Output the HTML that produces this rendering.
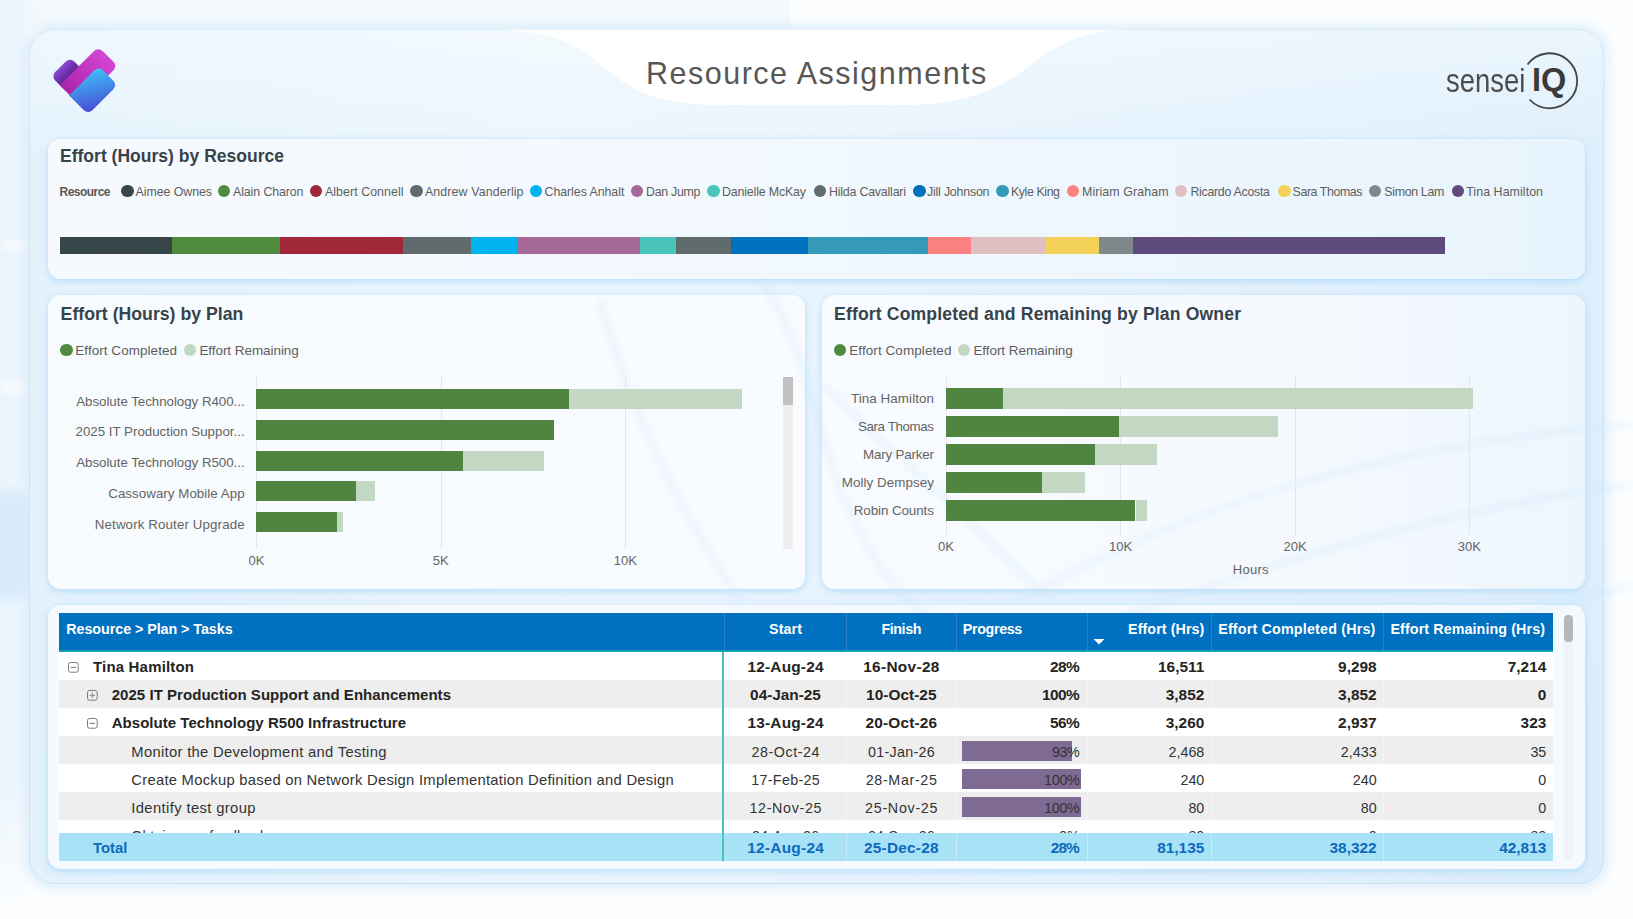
<!DOCTYPE html>
<html><head><meta charset="utf-8"><title>Resource Assignments</title>
<style>
html,body{margin:0;padding:0;}
body{width:1633px;height:919px;position:relative;overflow:hidden;font-family:"Liberation Sans", sans-serif;background:#fdfeff;}
.bg{position:absolute;left:0;top:0;}
.abs{position:absolute;}
.t{position:absolute;white-space:nowrap;}
.r{position:absolute;}
.dot{position:absolute;width:12.5px;height:12.5px;border-radius:50%;}
.card{position:absolute;border-radius:13px;box-shadow:0 2px 7px rgba(140,200,245,0.55);}
</style></head><body>
<svg class="bg" width="1633" height="919" viewBox="0 0 1633 919">
<defs>
<linearGradient id="bgl" x1="0" y1="0" x2="1" y2="0">
<stop offset="0" stop-color="#e9f4fc"/><stop offset="0.6" stop-color="#eef6fd"/><stop offset="1" stop-color="#eef6fd" stop-opacity="0"/>
</linearGradient>
<linearGradient id="panelg" x1="0" y1="0" x2="1" y2="0">
<stop offset="0" stop-color="#e2f1fc"/><stop offset="0.33" stop-color="#e9f5fd"/><stop offset="0.6" stop-color="#e5f2fd"/><stop offset="1" stop-color="#dbeefc"/>
</linearGradient>
<linearGradient id="panelv" x1="0" y1="0" x2="0" y2="1">
<stop offset="0" stop-color="#ffffff" stop-opacity="0.45"/><stop offset="0.14" stop-color="#ffffff" stop-opacity="0.1"/><stop offset="1" stop-color="#ffffff" stop-opacity="0"/>
</linearGradient>
<filter id="blur6" x="-10%" y="-10%" width="120%" height="120%"><feGaussianBlur stdDeviation="5"/></filter>
<filter id="blur3"><feGaussianBlur stdDeviation="2"/></filter>
</defs>
<rect width="1633" height="919" fill="#fdfeff"/>
<rect x="0" y="0" width="790" height="30" fill="#f4f9fd"/>
<mask id="lm"><linearGradient id="lmg" x1="0" y1="0" x2="0" y2="1"><stop offset="0" stop-color="#fff"/><stop offset="0.85" stop-color="#fff"/><stop offset="1" stop-color="#000"/></linearGradient><rect x="0" y="0" width="40" height="919" fill="url(#lmg)"/></mask>
<rect x="0" y="0" width="40" height="919" fill="url(#bgl)" mask="url(#lm)"/>
<ellipse cx="10" cy="545" rx="45" ry="55" fill="#d2e8fa" filter="url(#blur6)" opacity="0.7"/>
<rect x="0" y="240" width="26" height="10" fill="#ffffff" filter="url(#blur6)" opacity="0.6"/>
<rect x="0" y="380" width="26" height="14" fill="#ffffff" filter="url(#blur6)" opacity="0.6"/>
<rect x="23" y="23" width="1587" height="868" rx="31" fill="#d3e9fa" filter="url(#blur6)" opacity="0.6"/>
<rect x="29.5" y="29.5" width="1574" height="854" rx="25" fill="url(#panelg)" stroke="#c9e3f7" stroke-width="1"/>
<rect x="29.5" y="29.5" width="1574" height="854" rx="25" fill="url(#panelv)"/>
<path d="M495,29.5 C545,30 575,42 605,68 C635,95 665,105 725,105 L905,105 C960,105 995,92 1028,67 C1060,42 1085,29.5 1135,29.5 Z" fill="#ffffff"/>
</svg>
<svg class="abs" style="left:45px;top:40px" width="80" height="80" viewBox="45 40 80 80">
<defs>
<linearGradient id="lgp" x1="0.5" y1="0" x2="0.5" y2="0.55"><stop offset="0" stop-color="#8a4ad6"/><stop offset="1" stop-color="#5e2494"/></linearGradient>
<linearGradient id="lgm" x1="1" y1="0.5" x2="0" y2="0.5"><stop offset="0" stop-color="#d646d6"/><stop offset="1" stop-color="#a824a8"/></linearGradient>
<linearGradient id="lgb" x1="1" y1="0" x2="0" y2="1"><stop offset="0" stop-color="#3cc6f8"/><stop offset="1" stop-color="#4a46d4"/></linearGradient>
</defs>
<g transform="rotate(-45 0 0)">
<rect x="-18" y="90" width="27" height="24" rx="6" fill="url(#lgp)"/>
<path d="M-18,102.5 L30.5,102.5 A6,6 0 0 1 36.5,108.5 L36.5,124 A6,6 0 0 1 30.5,130 L-18,130 Z" fill="url(#lgm)"/>
<path d="M-18.7,116.5 L17,116.5 A6,6 0 0 1 23,122.5 L23,137.3 A6,6 0 0 1 17,143.3 L-12.7,143.3 A6,6 0 0 1 -18.7,137.3 Z" fill="url(#lgb)"/>
</g>
</svg>
<div class="t" style="left:646.00px;top:58.18px;font-size:30.5px;line-height:30.5px;font-weight:normal;color:#575757;letter-spacing:1.494px;">Resource Assignments</div>
<div class="t" style="left:1445.50px;top:64.79px;font-size:32.5px;line-height:32.5px;font-weight:normal;color:#4d4d4d;transform:scaleX(0.845);transform-origin:0 0;">sensei</div>
<svg class="abs" style="left:1515px;top:48px" width="70" height="65" viewBox="1515 48 70 65">
<path d="M1527.5,64.5 A27.5,27.5 0 1 1 1529.5,99.5" fill="none" stroke="#444" stroke-width="1.8"/>
</svg>
<div class="t" style="left:1532.00px;top:64.29px;font-size:32.5px;line-height:32.5px;font-weight:bold;color:#3a3a3a;">IQ</div>
<div class="card" style="left:48px;top:139px;width:1537px;height:140px;background:linear-gradient(to right,#f6fafe 0%,#f1f8fe 50%,#e8f4fd 100%)"></div>
<div class="card" style="left:48px;top:295px;width:757px;height:294px;background:linear-gradient(to right,#f7fbfe,#f8fbff)"></div>
<div class="card" style="left:822px;top:295px;width:763px;height:294px;background:linear-gradient(to right,#f8fbff 0%,#f5f9fe 60%,#edf6fd 100%)"></div>
<div class="card" style="left:48px;top:605px;width:1537px;height:264px;background:#f5faff"></div>
<svg class="bg" width="1633" height="919" viewBox="0 0 1633 919" style="pointer-events:none">
<defs><filter id="wblur" x="-5%" y="-5%" width="110%" height="110%"><feGaussianBlur stdDeviation="3"/></filter></defs>
<g fill="none" stroke="#c4e2fb" stroke-width="6" opacity="0.28" filter="url(#wblur)">
<path d="M1020,600 C1160,520 1360,445 1633,425"/>
<path d="M1100,625 C1260,565 1460,505 1633,485"/>
<path d="M822,385 C870,430 960,510 1050,600"/>
<path d="M600,300 C625,390 665,490 740,600"/>
<path d="M760,280 C800,330 815,420 840,490 C870,560 900,600 940,625"/>
<path d="M1480,625 C1530,610 1580,600 1633,585"/>
</g>
</svg>
<div class="t" style="left:60.00px;top:147.79px;font-size:17.5px;line-height:17.5px;font-weight:bold;color:#37434b;letter-spacing:0.014px;">Effort (Hours) by Resource</div>
<div class="t" style="left:60.60px;top:306.22px;font-size:17.7px;line-height:17.7px;font-weight:bold;color:#37434b;letter-spacing:-0.004px;">Effort (Hours) by Plan</div>
<div class="t" style="left:834.00px;top:305.90px;font-size:17.6px;line-height:17.6px;font-weight:bold;color:#37434b;letter-spacing:0.144px;">Effort Completed and Remaining by Plan Owner</div>
<div class="t" style="left:59.50px;top:185.64px;font-size:12px;line-height:12px;font-weight:bold;color:#5a5856;letter-spacing:-0.527px;">Resource</div>
<div class="dot" style="left:121.25px;top:184.75px;background:#374649"></div>
<div class="t" style="left:135.50px;top:186.00px;font-size:12.4px;line-height:12.4px;font-weight:normal;color:#605e5c;letter-spacing:-0.063px;">Aimee Ownes</div>
<div class="dot" style="left:217.75px;top:184.75px;background:#4f8a3f"></div>
<div class="t" style="left:233.00px;top:186.00px;font-size:12.4px;line-height:12.4px;font-weight:normal;color:#605e5c;letter-spacing:-0.103px;">Alain Charon</div>
<div class="dot" style="left:309.75px;top:184.75px;background:#a02838"></div>
<div class="t" style="left:325.00px;top:186.00px;font-size:12.4px;line-height:12.4px;font-weight:normal;color:#605e5c;letter-spacing:0.052px;">Albert Connell</div>
<div class="dot" style="left:410.25px;top:184.75px;background:#5f6b6d"></div>
<div class="t" style="left:425.00px;top:186.00px;font-size:12.4px;line-height:12.4px;font-weight:normal;color:#605e5c;letter-spacing:0.108px;">Andrew Vanderlip</div>
<div class="dot" style="left:529.75px;top:184.75px;background:#00b4ef"></div>
<div class="t" style="left:544.50px;top:186.00px;font-size:12.4px;line-height:12.4px;font-weight:normal;color:#605e5c;letter-spacing:-0.059px;">Charles Anhalt</div>
<div class="dot" style="left:630.75px;top:184.75px;background:#a66999"></div>
<div class="t" style="left:646.00px;top:186.00px;font-size:12.4px;line-height:12.4px;font-weight:normal;color:#605e5c;letter-spacing:-0.282px;">Dan Jump</div>
<div class="dot" style="left:707.25px;top:184.75px;background:#4ac5bb"></div>
<div class="t" style="left:722.00px;top:186.00px;font-size:12.4px;line-height:12.4px;font-weight:normal;color:#605e5c;letter-spacing:-0.16px;">Danielle McKay</div>
<div class="dot" style="left:813.75px;top:184.75px;background:#5f6b6d"></div>
<div class="t" style="left:829.00px;top:186.00px;font-size:12.4px;line-height:12.4px;font-weight:normal;color:#605e5c;letter-spacing:-0.206px;">Hilda Cavallari</div>
<div class="dot" style="left:913.35px;top:184.75px;background:#0070c0"></div>
<div class="t" style="left:927.00px;top:186.00px;font-size:12.4px;line-height:12.4px;font-weight:normal;color:#605e5c;letter-spacing:-0.204px;">Jill Johnson</div>
<div class="dot" style="left:996.45px;top:184.75px;background:#3599b8"></div>
<div class="t" style="left:1011.00px;top:186.00px;font-size:12.4px;line-height:12.4px;font-weight:normal;color:#605e5c;letter-spacing:-0.418px;">Kyle King</div>
<div class="dot" style="left:1066.75px;top:184.75px;background:#fb8281"></div>
<div class="t" style="left:1082.00px;top:186.00px;font-size:12.4px;line-height:12.4px;font-weight:normal;color:#605e5c;letter-spacing:0.094px;">Miriam Graham</div>
<div class="dot" style="left:1174.75px;top:184.75px;background:#dfbfbf"></div>
<div class="t" style="left:1190.40px;top:186.00px;font-size:12.4px;line-height:12.4px;font-weight:normal;color:#605e5c;letter-spacing:-0.286px;">Ricardo Acosta</div>
<div class="dot" style="left:1278.15px;top:184.75px;background:#f4d25a"></div>
<div class="t" style="left:1292.60px;top:186.00px;font-size:12.4px;line-height:12.4px;font-weight:normal;color:#605e5c;letter-spacing:-0.427px;">Sara Thomas</div>
<div class="dot" style="left:1368.75px;top:184.75px;background:#7f898a"></div>
<div class="t" style="left:1384.30px;top:186.00px;font-size:12.4px;line-height:12.4px;font-weight:normal;color:#605e5c;letter-spacing:-0.333px;">Simon Lam</div>
<div class="dot" style="left:1451.75px;top:184.75px;background:#5f4b7b"></div>
<div class="t" style="left:1466.20px;top:186.00px;font-size:12.4px;line-height:12.4px;font-weight:normal;color:#605e5c;letter-spacing:0.069px;">Tina Hamilton</div>
<div class="r" style="left:59.5px;top:237px;width:112.9px;height:17px;background:#374649;"></div>
<div class="r" style="left:172.4px;top:237px;width:107.6px;height:17px;background:#4f8a3f;"></div>
<div class="r" style="left:280px;top:237px;width:123px;height:17px;background:#a02838;"></div>
<div class="r" style="left:403px;top:237px;width:67.5px;height:17px;background:#5f6b6d;"></div>
<div class="r" style="left:470.5px;top:237px;width:46.0px;height:17px;background:#00b4ef;"></div>
<div class="r" style="left:516.5px;top:237px;width:123.5px;height:17px;background:#a66999;"></div>
<div class="r" style="left:640px;top:237px;width:36px;height:17px;background:#4ac5bb;"></div>
<div class="r" style="left:676px;top:237px;width:55.39999999999998px;height:17px;background:#5f6b6d;"></div>
<div class="r" style="left:731.4px;top:237px;width:76.60000000000002px;height:17px;background:#0070c0;"></div>
<div class="r" style="left:808px;top:237px;width:120px;height:17px;background:#3599b8;"></div>
<div class="r" style="left:928px;top:237px;width:43px;height:17px;background:#fb8281;"></div>
<div class="r" style="left:971px;top:237px;width:74px;height:17px;background:#dfbfbf;"></div>
<div class="r" style="left:1045px;top:237px;width:54px;height:17px;background:#f4d25a;"></div>
<div class="r" style="left:1099px;top:237px;width:34px;height:17px;background:#7f898a;"></div>
<div class="r" style="left:1133px;top:237px;width:311.5999999999999px;height:17px;background:#5f4b7b;"></div>
<div class="r" style="left:256px;top:376px;width:1px;height:173px;background:#e6e6e6;"></div>
<div class="r" style="left:440.6px;top:376px;width:1.0px;height:173px;background:#e6e6e6;"></div>
<div class="r" style="left:625px;top:376px;width:1px;height:173px;background:#e6e6e6;"></div>
<div class="t" style="left:-243.50px;width:1000px;text-align:center;top:554.00px;font-size:13px;line-height:13px;font-weight:normal;color:#666462;">0K</div>
<div class="t" style="left:-59.40px;width:1000px;text-align:center;top:554.00px;font-size:13px;line-height:13px;font-weight:normal;color:#666462;">5K</div>
<div class="t" style="left:125.30px;width:1000px;text-align:center;top:554.00px;font-size:13px;line-height:13px;font-weight:normal;color:#666462;">10K</div>
<div class="dot" style="left:60.150000000000006px;top:343.95px;background:#4f8a3f"></div>
<div class="t" style="left:75.30px;top:343.97px;font-size:13.5px;line-height:13.5px;font-weight:normal;color:#605e5c;letter-spacing:0.043px;">Effort Completed</div>
<div class="dot" style="left:183.55px;top:343.95px;background:#c2d6c4"></div>
<div class="t" style="left:199.40px;top:343.97px;font-size:13.5px;line-height:13.5px;font-weight:normal;color:#605e5c;letter-spacing:-0.06px;">Effort Remaining</div>
<div class="r" style="left:256px;top:389.0px;width:313.4px;height:20.0px;background:#4f8540;"></div>
<div class="r" style="left:569.4px;top:389.0px;width:172.39999999999998px;height:20.0px;background:#c3d8c3;"></div>
<div class="t" style="left:-755.43px;width:1000px;text-align:right;top:394.54px;font-size:13.3px;line-height:13.3px;font-weight:normal;color:#666462;letter-spacing:-0.026px;">Absolute Technology R400...</div>
<div class="r" style="left:256px;top:419.8px;width:297.70000000000005px;height:20.0px;background:#4f8540;"></div>
<div class="t" style="left:-755.40px;width:1000px;text-align:right;top:425.29px;font-size:13.3px;line-height:13.3px;font-weight:normal;color:#666462;letter-spacing:0.001px;">2025 IT Production Suppor...</div>
<div class="r" style="left:256px;top:450.5px;width:206.5px;height:20.0px;background:#4f8540;"></div>
<div class="r" style="left:462.5px;top:450.5px;width:81.89999999999998px;height:20.0px;background:#c3d8c3;"></div>
<div class="t" style="left:-755.43px;width:1000px;text-align:right;top:456.04px;font-size:13.3px;line-height:13.3px;font-weight:normal;color:#666462;letter-spacing:-0.026px;">Absolute Technology R500...</div>
<div class="r" style="left:256px;top:481.2px;width:99.69999999999999px;height:20.0px;background:#4f8540;"></div>
<div class="r" style="left:355.7px;top:481.2px;width:19.19999999999999px;height:20.0px;background:#c3d8c3;"></div>
<div class="t" style="left:-755.34px;width:1000px;text-align:right;top:486.79px;font-size:13.3px;line-height:13.3px;font-weight:normal;color:#666462;letter-spacing:0.059px;">Cassowary Mobile App</div>
<div class="r" style="left:256px;top:512.0px;width:81.19999999999999px;height:20.0px;background:#4f8540;"></div>
<div class="r" style="left:337.2px;top:512.0px;width:5.5px;height:20.0px;background:#c3d8c3;"></div>
<div class="t" style="left:-755.27px;width:1000px;text-align:right;top:517.54px;font-size:13.3px;line-height:13.3px;font-weight:normal;color:#666462;letter-spacing:0.13px;">Network Router Upgrade</div>
<div class="r" style="left:783.3px;top:377px;width:9.700000000000045px;height:172px;background:#efefef;"></div>
<div class="r" style="left:783.3px;top:377px;width:9.700000000000045px;height:28px;background:#c1c1c1;"></div>
<div class="r" style="left:945.6px;top:376px;width:1.0px;height:159px;background:#e6e6e6;"></div>
<div class="r" style="left:1120px;top:376px;width:1px;height:159px;background:#e6e6e6;"></div>
<div class="r" style="left:1294.6px;top:376px;width:1.0px;height:159px;background:#e6e6e6;"></div>
<div class="r" style="left:1468.8px;top:376px;width:1.0px;height:159px;background:#e6e6e6;"></div>
<div class="t" style="left:446.00px;width:1000px;text-align:center;top:540.00px;font-size:13px;line-height:13px;font-weight:normal;color:#666462;">0K</div>
<div class="t" style="left:620.50px;width:1000px;text-align:center;top:540.00px;font-size:13px;line-height:13px;font-weight:normal;color:#666462;">10K</div>
<div class="t" style="left:795.00px;width:1000px;text-align:center;top:540.00px;font-size:13px;line-height:13px;font-weight:normal;color:#666462;">20K</div>
<div class="t" style="left:969.30px;width:1000px;text-align:center;top:540.00px;font-size:13px;line-height:13px;font-weight:normal;color:#666462;">30K</div>
<div class="t" style="left:750.83px;width:1000px;text-align:center;top:563.00px;font-size:13px;line-height:13px;font-weight:normal;color:#666462;letter-spacing:0.256px;">Hours</div>
<div class="dot" style="left:833.75px;top:343.95px;background:#4f8a3f"></div>
<div class="t" style="left:849.30px;top:343.97px;font-size:13.5px;line-height:13.5px;font-weight:normal;color:#605e5c;letter-spacing:0.07px;">Effort Completed</div>
<div class="dot" style="left:957.75px;top:343.95px;background:#c2d6c4"></div>
<div class="t" style="left:973.40px;top:343.97px;font-size:13.5px;line-height:13.5px;font-weight:normal;color:#605e5c;letter-spacing:-0.06px;">Effort Remaining</div>
<div class="r" style="left:945.6px;top:388px;width:57.19999999999993px;height:21px;background:#4f8540;"></div>
<div class="r" style="left:1002.8px;top:388px;width:470.4000000000001px;height:21px;background:#c3d8c3;"></div>
<div class="t" style="left:-66.03px;width:1000px;text-align:right;top:391.86px;font-size:13.4px;line-height:13.4px;font-weight:normal;color:#666462;letter-spacing:0.066px;">Tina Hamilton</div>
<div class="r" style="left:945.6px;top:416px;width:173.80000000000007px;height:21px;background:#4f8540;"></div>
<div class="r" style="left:1119.4px;top:416px;width:158.39999999999986px;height:21px;background:#c3d8c3;"></div>
<div class="t" style="left:-66.53px;width:1000px;text-align:right;top:419.86px;font-size:13.4px;line-height:13.4px;font-weight:normal;color:#666462;letter-spacing:-0.428px;">Sara Thomas</div>
<div class="r" style="left:945.6px;top:444px;width:149.39999999999998px;height:21px;background:#4f8540;"></div>
<div class="r" style="left:1095px;top:444px;width:62.40000000000009px;height:21px;background:#c3d8c3;"></div>
<div class="t" style="left:-66.30px;width:1000px;text-align:right;top:447.86px;font-size:13.4px;line-height:13.4px;font-weight:normal;color:#666462;letter-spacing:-0.202px;">Mary Parker</div>
<div class="r" style="left:945.6px;top:472px;width:96.30000000000007px;height:21px;background:#4f8540;"></div>
<div class="r" style="left:1041.9px;top:472px;width:43.09999999999991px;height:21px;background:#c3d8c3;"></div>
<div class="t" style="left:-66.04px;width:1000px;text-align:right;top:475.86px;font-size:13.4px;line-height:13.4px;font-weight:normal;color:#666462;letter-spacing:0.056px;">Molly Dempsey</div>
<div class="r" style="left:945.6px;top:500px;width:189.89999999999998px;height:21px;background:#4f8540;"></div>
<div class="r" style="left:1135.5px;top:500px;width:11.299999999999955px;height:21px;background:#c3d8c3;"></div>
<div class="t" style="left:-66.18px;width:1000px;text-align:right;top:503.86px;font-size:13.4px;line-height:13.4px;font-weight:normal;color:#666462;letter-spacing:-0.085px;">Robin Counts</div>
<div class="r" style="left:59.4px;top:613px;width:1493.6px;height:37px;background:#0070c0;"></div>
<div class="r" style="left:59.4px;top:650px;width:1493.6px;height:2px;background:#13a4b4;"></div>
<div class="r" style="left:724px;top:613px;width:1px;height:37px;background:#2b82c8;"></div>
<div class="r" style="left:846.4px;top:613px;width:1.0px;height:37px;background:#2b82c8;"></div>
<div class="r" style="left:956px;top:613px;width:1px;height:37px;background:#2b82c8;"></div>
<div class="r" style="left:1087.4px;top:613px;width:1.0px;height:37px;background:#2b82c8;"></div>
<div class="r" style="left:1211.4px;top:613px;width:1.0px;height:37px;background:#2b82c8;"></div>
<div class="r" style="left:1383.4px;top:613px;width:1.0px;height:37px;background:#2b82c8;"></div>
<div class="r" style="left:59.4px;top:652px;width:1493.6px;height:28px;background:#ffffff;"></div>
<div class="r" style="left:59.4px;top:680px;width:1493.6px;height:28px;background:#eeeeee;"></div>
<div class="r" style="left:59.4px;top:708px;width:1493.6px;height:28px;background:#ffffff;"></div>
<div class="r" style="left:59.4px;top:736px;width:1493.6px;height:28px;background:#eeeeee;"></div>
<div class="r" style="left:59.4px;top:764px;width:1493.6px;height:28px;background:#ffffff;"></div>
<div class="r" style="left:59.4px;top:792px;width:1493.6px;height:28px;background:#eeeeee;"></div>
<div class="r" style="left:59.4px;top:820px;width:1493.6px;height:13px;background:#ffffff;"></div>
<div class="r" style="left:59.4px;top:833px;width:1493.6px;height:28px;background:#a8e2f6;"></div>
<div class="r" style="left:846.4px;top:652px;width:1.0px;height:209px;background:rgba(255,255,255,0.35);"></div>
<div class="r" style="left:956px;top:652px;width:1px;height:209px;background:rgba(255,255,255,0.35);"></div>
<div class="r" style="left:1087.4px;top:652px;width:1.0px;height:209px;background:rgba(255,255,255,0.35);"></div>
<div class="r" style="left:1211.4px;top:652px;width:1.0px;height:209px;background:rgba(255,255,255,0.35);"></div>
<div class="r" style="left:1383.4px;top:652px;width:1.0px;height:209px;background:rgba(255,255,255,0.35);"></div>
<div class="r" style="left:722.2px;top:652px;width:2.0px;height:209px;background:#4cc3b8;"></div>
<div class="r" style="left:1564.2px;top:615px;width:8.5px;height:244px;background:#eef4f9;border-radius:4px;"></div>
<div class="r" style="left:1564.2px;top:615px;width:8.5px;height:27.399999999999977px;background:#b8b8b8;border-radius:4px;"></div>
<div class="t" style="left:66.30px;top:622.10px;font-size:14.3px;line-height:14.3px;font-weight:bold;color:#ffffff;letter-spacing:-0.051px;">Resource &gt; Plan &gt; Tasks</div>
<div class="t" style="left:285.55px;width:1000px;text-align:center;top:622.10px;font-size:14.3px;line-height:14.3px;font-weight:bold;color:#ffffff;letter-spacing:0.107px;">Start</div>
<div class="t" style="left:401.19px;width:1000px;text-align:center;top:622.10px;font-size:14.3px;line-height:14.3px;font-weight:bold;color:#ffffff;letter-spacing:-0.419px;">Finish</div>
<div class="t" style="left:962.80px;top:622.10px;font-size:14.3px;line-height:14.3px;font-weight:bold;color:#ffffff;letter-spacing:-0.355px;">Progress</div>
<div class="t" style="left:204.37px;width:1000px;text-align:right;top:622.10px;font-size:14.3px;line-height:14.3px;font-weight:bold;color:#ffffff;letter-spacing:0.068px;">Effort (Hrs)</div>
<div class="t" style="left:1218.20px;top:622.10px;font-size:14.3px;line-height:14.3px;font-weight:bold;color:#ffffff;letter-spacing:0.181px;">Effort Completed (Hrs)</div>
<div class="t" style="left:545.10px;width:1000px;text-align:right;top:622.10px;font-size:14.3px;line-height:14.3px;font-weight:bold;color:#ffffff;letter-spacing:0.095px;">Effort Remaining (Hrs)</div>
<svg class="abs" style="left:1092px;top:638.3px" width="14" height="8" viewBox="0 0 14 8"><path d="M1.5,1 L12.5,1 L7,6.5 Z" fill="#fff"/></svg>
<div class="t" style="left:93.00px;top:659.30px;font-size:15.0px;line-height:15.0px;font-weight:bold;color:#252423;letter-spacing:0.175px;">Tina Hamilton</div>
<div class="t" style="left:285.61px;width:1000px;text-align:center;top:658.96px;font-size:15.4px;line-height:15.4px;font-weight:bold;color:#252423;letter-spacing:0.212px;">12-Aug-24</div>
<div class="t" style="left:401.46px;width:1000px;text-align:center;top:658.96px;font-size:15.4px;line-height:15.4px;font-weight:bold;color:#252423;letter-spacing:0.317px;">16-Nov-28</div>
<div class="t" style="left:79.30px;width:1000px;text-align:right;top:658.96px;font-size:15.4px;line-height:15.4px;font-weight:bold;color:#252423;letter-spacing:-0.502px;">28%</div>
<div class="t" style="left:204.30px;width:1000px;text-align:right;top:658.96px;font-size:15.4px;line-height:15.4px;font-weight:bold;color:#252423;">16,511</div>
<div class="t" style="left:376.60px;width:1000px;text-align:right;top:658.96px;font-size:15.4px;line-height:15.4px;font-weight:bold;color:#252423;">9,298</div>
<div class="t" style="left:546.30px;width:1000px;text-align:right;top:658.96px;font-size:15.4px;line-height:15.4px;font-weight:bold;color:#252423;">7,214</div>
<svg class="abs" style="left:67.6px;top:661.9px" width="11" height="11" viewBox="0 0 11 11"><rect x="0.5" y="0.5" width="9.7" height="9.7" rx="2" fill="none" stroke="#7a7a7a" stroke-width="1"/><path d="M2.6,5.35 H8.1" stroke="#777" stroke-width="1"/></svg>
<div class="t" style="left:111.70px;top:687.30px;font-size:15.0px;line-height:15.0px;font-weight:bold;color:#252423;letter-spacing:0.042px;">2025 IT Production Support and Enhancements</div>
<div class="t" style="left:285.49px;width:1000px;text-align:center;top:686.96px;font-size:15.4px;line-height:15.4px;font-weight:bold;color:#252423;letter-spacing:-0.026px;">04-Jan-25</div>
<div class="t" style="left:401.32px;width:1000px;text-align:center;top:686.96px;font-size:15.4px;line-height:15.4px;font-weight:bold;color:#252423;letter-spacing:0.032px;">10-Oct-25</div>
<div class="t" style="left:79.25px;width:1000px;text-align:right;top:686.96px;font-size:15.4px;line-height:15.4px;font-weight:bold;color:#252423;letter-spacing:-0.554px;">100%</div>
<div class="t" style="left:204.30px;width:1000px;text-align:right;top:686.96px;font-size:15.4px;line-height:15.4px;font-weight:bold;color:#252423;">3,852</div>
<div class="t" style="left:376.60px;width:1000px;text-align:right;top:686.96px;font-size:15.4px;line-height:15.4px;font-weight:bold;color:#252423;">3,852</div>
<div class="t" style="left:546.30px;width:1000px;text-align:right;top:686.96px;font-size:15.4px;line-height:15.4px;font-weight:bold;color:#252423;">0</div>
<svg class="abs" style="left:86.5px;top:689.9px" width="11" height="11" viewBox="0 0 11 11"><rect x="0.5" y="0.5" width="9.7" height="9.7" rx="2" fill="none" stroke="#7a7a7a" stroke-width="1"/><path d="M2.6,5.35 H8.1 M5.35,2.6 V8.1" stroke="#888" stroke-width="1"/></svg>
<div class="t" style="left:111.70px;top:715.30px;font-size:15.0px;line-height:15.0px;font-weight:bold;color:#252423;letter-spacing:0.034px;">Absolute Technology R500 Infrastructure</div>
<div class="t" style="left:285.61px;width:1000px;text-align:center;top:714.96px;font-size:15.4px;line-height:15.4px;font-weight:bold;color:#252423;letter-spacing:0.212px;">13-Aug-24</div>
<div class="t" style="left:401.40px;width:1000px;text-align:center;top:714.96px;font-size:15.4px;line-height:15.4px;font-weight:bold;color:#252423;letter-spacing:0.207px;">20-Oct-26</div>
<div class="t" style="left:79.30px;width:1000px;text-align:right;top:714.96px;font-size:15.4px;line-height:15.4px;font-weight:bold;color:#252423;letter-spacing:-0.502px;">56%</div>
<div class="t" style="left:204.30px;width:1000px;text-align:right;top:714.96px;font-size:15.4px;line-height:15.4px;font-weight:bold;color:#252423;">3,260</div>
<div class="t" style="left:376.60px;width:1000px;text-align:right;top:714.96px;font-size:15.4px;line-height:15.4px;font-weight:bold;color:#252423;">2,937</div>
<div class="t" style="left:546.30px;width:1000px;text-align:right;top:714.96px;font-size:15.4px;line-height:15.4px;font-weight:bold;color:#252423;">323</div>
<svg class="abs" style="left:86.5px;top:717.9px" width="11" height="11" viewBox="0 0 11 11"><rect x="0.5" y="0.5" width="9.7" height="9.7" rx="2" fill="none" stroke="#7a7a7a" stroke-width="1"/><path d="M2.6,5.35 H8.1" stroke="#777" stroke-width="1"/></svg>
<div class="r" style="left:962.4px;top:740.5px;width:109.60000000000002px;height:20.0px;background:#7f6a93;"></div>
<div class="t" style="left:131.30px;top:744.97px;font-size:14.8px;line-height:14.8px;font-weight:normal;color:#333333;letter-spacing:0.303px;">Monitor the Development and Testing</div>
<div class="t" style="left:285.76px;width:1000px;text-align:center;top:744.70px;font-size:14.3px;line-height:14.3px;font-weight:normal;color:#333333;letter-spacing:0.529px;">28-Oct-24</div>
<div class="t" style="left:401.45px;width:1000px;text-align:center;top:744.70px;font-size:14.3px;line-height:14.3px;font-weight:normal;color:#333333;letter-spacing:0.303px;">01-Jan-26</div>
<div class="t" style="left:79.39px;width:1000px;text-align:right;top:744.70px;font-size:14.3px;line-height:14.3px;font-weight:normal;color:#333333;letter-spacing:-0.407px;">93%</div>
<div class="t" style="left:204.30px;width:1000px;text-align:right;top:744.70px;font-size:14.3px;line-height:14.3px;font-weight:normal;color:#333333;">2,468</div>
<div class="t" style="left:376.60px;width:1000px;text-align:right;top:744.70px;font-size:14.3px;line-height:14.3px;font-weight:normal;color:#333333;">2,433</div>
<div class="t" style="left:546.30px;width:1000px;text-align:right;top:744.70px;font-size:14.3px;line-height:14.3px;font-weight:normal;color:#333333;">35</div>
<div class="r" style="left:962.4px;top:768.5px;width:118.39999999999998px;height:20.0px;background:#7f6a93;"></div>
<div class="t" style="left:131.30px;top:772.97px;font-size:14.8px;line-height:14.8px;font-weight:normal;color:#333333;letter-spacing:0.254px;">Create Mockup based on Network Design Implementation Definition and Design</div>
<div class="t" style="left:285.66px;width:1000px;text-align:center;top:772.70px;font-size:14.3px;line-height:14.3px;font-weight:normal;color:#333333;letter-spacing:0.317px;">17-Feb-25</div>
<div class="t" style="left:401.62px;width:1000px;text-align:center;top:772.70px;font-size:14.3px;line-height:14.3px;font-weight:normal;color:#333333;letter-spacing:0.644px;">28-Mar-25</div>
<div class="t" style="left:79.51px;width:1000px;text-align:right;top:772.70px;font-size:14.3px;line-height:14.3px;font-weight:normal;color:#333333;letter-spacing:-0.289px;">100%</div>
<div class="t" style="left:204.30px;width:1000px;text-align:right;top:772.70px;font-size:14.3px;line-height:14.3px;font-weight:normal;color:#333333;">240</div>
<div class="t" style="left:376.60px;width:1000px;text-align:right;top:772.70px;font-size:14.3px;line-height:14.3px;font-weight:normal;color:#333333;">240</div>
<div class="t" style="left:546.30px;width:1000px;text-align:right;top:772.70px;font-size:14.3px;line-height:14.3px;font-weight:normal;color:#333333;">0</div>
<div class="r" style="left:962.4px;top:796.5px;width:118.39999999999998px;height:20.0px;background:#7f6a93;"></div>
<div class="t" style="left:131.30px;top:800.97px;font-size:14.8px;line-height:14.8px;font-weight:normal;color:#333333;letter-spacing:0.365px;">Identify test group</div>
<div class="t" style="left:285.83px;width:1000px;text-align:center;top:800.70px;font-size:14.3px;line-height:14.3px;font-weight:normal;color:#333333;letter-spacing:0.669px;">12-Nov-25</div>
<div class="t" style="left:401.65px;width:1000px;text-align:center;top:800.70px;font-size:14.3px;line-height:14.3px;font-weight:normal;color:#333333;letter-spacing:0.706px;">25-Nov-25</div>
<div class="t" style="left:79.51px;width:1000px;text-align:right;top:800.70px;font-size:14.3px;line-height:14.3px;font-weight:normal;color:#333333;letter-spacing:-0.289px;">100%</div>
<div class="t" style="left:204.30px;width:1000px;text-align:right;top:800.70px;font-size:14.3px;line-height:14.3px;font-weight:normal;color:#333333;">80</div>
<div class="t" style="left:376.60px;width:1000px;text-align:right;top:800.70px;font-size:14.3px;line-height:14.3px;font-weight:normal;color:#333333;">80</div>
<div class="t" style="left:546.30px;width:1000px;text-align:right;top:800.70px;font-size:14.3px;line-height:14.3px;font-weight:normal;color:#333333;">0</div>
<div class="abs" style="left:59.4px;top:820px;width:1494px;height:13px;overflow:hidden">
<div class="t" style="left:71.90px;top:9.30px;font-size:14.3px;line-height:14.3px;color:#333">Obtain user feedback</div>
<div class="t" style="left:226.10px;width:1000px;text-align:center;top:9.30px;font-size:14.3px;line-height:14.3px;color:#333">24-Aug-26</div>
<div class="t" style="left:341.90px;width:1000px;text-align:center;top:9.30px;font-size:14.3px;line-height:14.3px;color:#333">04-Sep-26</div>
<div class="t" style="left:20.40px;width:1000px;text-align:right;top:9.30px;font-size:14.3px;line-height:14.3px;color:#333">0%</div>
<div class="t" style="left:144.90px;width:1000px;text-align:right;top:9.30px;font-size:14.3px;line-height:14.3px;color:#333">80</div>
<div class="t" style="left:317.20px;width:1000px;text-align:right;top:9.30px;font-size:14.3px;line-height:14.3px;color:#333">0</div>
<div class="t" style="left:486.90px;width:1000px;text-align:right;top:9.30px;font-size:14.3px;line-height:14.3px;color:#333">80</div>
</div>
<div class="t" style="left:93.00px;top:840.67px;font-size:14.8px;line-height:14.8px;font-weight:bold;color:#0e69bd;letter-spacing:0.013px;">Total</div>
<div class="t" style="left:285.64px;width:1000px;text-align:center;top:840.16px;font-size:15.4px;line-height:15.4px;font-weight:bold;color:#0e69bd;letter-spacing:0.287px;">12-Aug-24</div>
<div class="t" style="left:401.40px;width:1000px;text-align:center;top:840.16px;font-size:15.4px;line-height:15.4px;font-weight:bold;color:#0e69bd;letter-spacing:0.21px;">25-Dec-28</div>
<div class="t" style="left:78.95px;width:1000px;text-align:right;top:840.16px;font-size:15.4px;line-height:15.4px;font-weight:bold;color:#0e69bd;letter-spacing:-0.852px;">28%</div>
<div class="t" style="left:204.30px;width:1000px;text-align:right;top:840.16px;font-size:15.4px;line-height:15.4px;font-weight:bold;color:#0e69bd;">81,135</div>
<div class="t" style="left:376.60px;width:1000px;text-align:right;top:840.16px;font-size:15.4px;line-height:15.4px;font-weight:bold;color:#0e69bd;">38,322</div>
<div class="t" style="left:546.30px;width:1000px;text-align:right;top:840.16px;font-size:15.4px;line-height:15.4px;font-weight:bold;color:#0e69bd;">42,813</div>
</body></html>
